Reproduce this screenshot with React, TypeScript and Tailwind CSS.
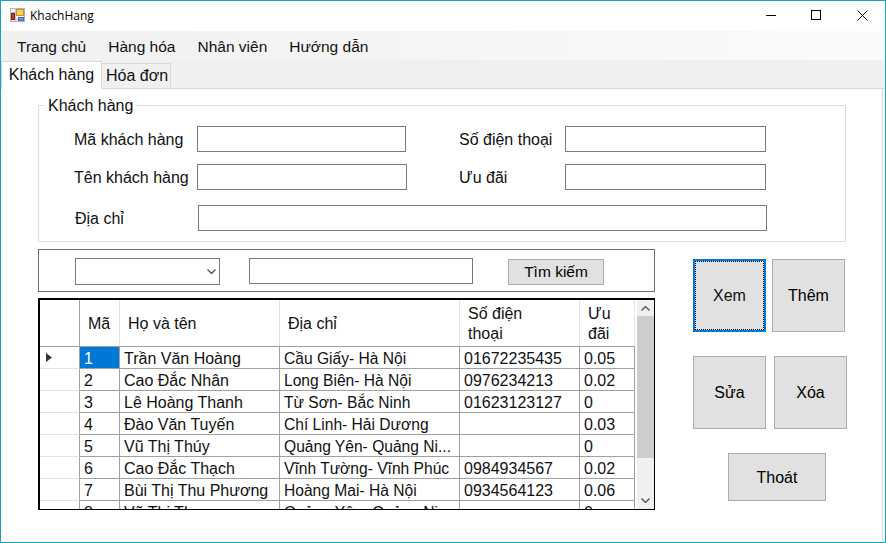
const rows = [
  { id: '1', name: 'Trần Văn Hoàng', address: 'Cầu Giấy- Hà Nội', phone: '01672235435', deal: '0.05' },
  { id: '2', name: 'Cao Đắc Nhân', address: 'Long Biên- Hà Nội', phone: '0976234213', deal: '0.02' },
  { id: '3', name: 'Lê Hoàng Thanh', address: 'Từ Sơn- Bắc Ninh', phone: '01623123127', deal: '0' },
  { id: '4', name: 'Đào Văn Tuyến', address: 'Chí Linh- Hải Dương', phone: '', deal: '0.03' },
  { id: '5', name: 'Vũ Thị Thúy', address: 'Quảng Yên- Quảng Ni...', phone: '', deal: '0' },
  { id: '6', name: 'Cao Đắc Thạch', address: 'Vĩnh Tường- Vĩnh Phúc', phone: '0984934567', deal: '0.02' },
  { id: '7', name: 'Bùi Thị Thu Phương', address: 'Hoàng Mai- Hà Nội', phone: '0934564123', deal: '0.06' },
  { id: '8', name: 'Vũ Thị Thu', address: 'Quảng Yên- Quảng Ni...', phone: '', deal: '0' },
];

function FormIcon() {
  return (
    <svg width="15" height="14" viewBox="0 0 15 14" className="shrink-0">
      <rect x="0.5" y="0.5" width="14" height="13" fill="#f4f4f4" stroke="#b4b4b4" />
      <path d="M0.5 4.5H5M5.5 0.5V13.5M5.5 11.5H14" stroke="#c4c4c4" fill="none" />
      <rect x="6.5" y="1.5" width="7" height="6" fill="#f8d052" stroke="#c8932a" />
      <rect x="1.5" y="5.5" width="3" height="6" fill="#c8321f" stroke="#8a2418" />
      <rect x="8.5" y="9.5" width="5" height="3" fill="#5f97e0" stroke="#3f6fb0" />
    </svg>
  );
}

function Chevron({ up, className }: { up?: boolean; className?: string }) {
  return (
    <svg width="9" height="5" viewBox="0 0 9 5" className={className}>
      <path d={up ? 'M0.5 4.5L4.5 0.5L8.5 4.5' : 'M0.5 0.5L4.5 4.5L8.5 0.5'} fill="none" stroke="#505050" strokeWidth="1.3" />
    </svg>
  );
}

function Input({ className }: { className: string }) {
  return <input className={`h-[26px] border border-[#7a7a7a] bg-white ${className}`} />;
}

function Button({ label, className }: { label: string; className: string }) {
  return (
    <button className={`bg-[#e1e1e1] border border-[#adadad] text-black ${className}`}>
      {label}
    </button>
  );
}

export default function App() {
  return (
    <div className="w-[886px] h-[543px] flex flex-col overflow-hidden bg-white border border-[#17a2c4] text-[16px] leading-[18px] text-[#111] font-['Liberation_Sans',Arial,sans-serif]">
      {/* title bar */}
      <div className="h-[30px] shrink-0 flex items-center pl-[9px] pb-[2px]">
        <FormIcon />
        <span className="ml-[5px] mt-[2px] text-[12px] font-['Open_Sans','Noto_Sans',sans-serif] text-black">KhachHang</span>
        <div className="ml-auto flex items-center">
          <svg width="10" height="10" viewBox="0 0 10 10" className="mr-[35px]">
            <path d="M0 5.5H10" stroke="#000" strokeWidth="1" />
          </svg>
          <svg width="10" height="10" viewBox="0 0 10 10" className="mr-[36px]">
            <rect x="0.5" y="0.5" width="9" height="9" fill="none" stroke="#000" />
          </svg>
          <svg width="11" height="11" viewBox="0 0 11 11" className="mr-[17px]">
            <path d="M0.5 0.5L10.5 10.5M10.5 0.5L0.5 10.5" stroke="#111" strokeWidth="1" />
          </svg>
        </div>
      </div>

      {/* menu */}
      <div className="h-[29px] shrink-0 flex items-center gap-[22px] pl-[16px] pt-[2px] text-[15.5px] bg-gradient-to-r from-[#f0f0f0] to-[#fbfbfb]">
        <span>Trang chủ</span>
        <span>Hàng hóa</span>
        <span>Nhân viên</span>
        <span>Hướng dẫn</span>
      </div>

      {/* tabs */}
      <div className="h-[29px] shrink-0 flex items-end bg-[#f0f0f0] border-b border-[#d9d9d9]">
        <div className="w-[101px] h-[28px] -mb-px pb-[2px] flex items-center justify-center bg-white border border-b-0 border-[#d9d9d9]">
          Khách hàng
        </div>
        <div className="w-[69px] h-[25px] pl-[2px] flex items-center justify-center border border-b-0 border-l-0 border-[#d9d9d9]">
          Hóa đơn
        </div>
      </div>

      {/* tab page */}
      <div className="flex-1 mr-[2px] border-r border-[#d9d9d9] pl-[37px] pt-[7px]">
        <fieldset className="w-[808px] h-[146px] border border-[#dcdcdc]">
          <legend className="ml-[6px] px-[3px] pt-[1px] leading-[18px]">Khách hàng</legend>
          <div className="pl-[35px] pt-[11px]">
            <div className="flex items-center h-[26px]">
              <span className="w-[123px] pt-[2px]">Mã khách hàng</span>
              <Input className="w-[209px]" />
              <span className="ml-[53px] w-[106px] pt-[2px]">Số điện thoại</span>
              <Input className="w-[201px]" />
            </div>
            <div className="flex items-center h-[26px] mt-[12px]">
              <span className="w-[123px] pt-[2px]">Tên khách hàng</span>
              <Input className="w-[210px]" />
              <span className="ml-[52px] w-[106px] pt-[2px]">Ưu đãi</span>
              <Input className="w-[201px]" />
            </div>
            <div className="flex items-center h-[26px] mt-[15px]">
              <span className="w-[124px] pl-[1px] pt-[2px]">Địa chỉ</span>
              <Input className="w-[569px]" />
            </div>
          </div>
        </fieldset>

        <div className="flex mt-[7px]">
          <div className="w-[617px] shrink-0">
            {/* search */}
            <div className="h-[43px] flex items-start border border-[#6e6e6e] pl-[36px] pt-[8px]">
              <div className="w-[145px] h-[27px] flex items-center justify-end pr-[3px] border border-[#7a7a7a]">
                <Chevron />
              </div>
              <Input className="ml-[29px] w-[224px]" />
              <Button label="Tìm kiếm" className="ml-[35px] mt-[1px] w-[96px] h-[26px] text-[15.5px] leading-none" />
            </div>

            {/* grid */}
            <div className="h-[212px] mt-[6px] flex overflow-hidden border-l-2 border-t-2 border-r border-b border-black">
              <div className="w-[595px] shrink-0 overflow-hidden">
                <div className="h-[47px] grid grid-cols-[40px_40px_160px_180px_120px_55px] border-b border-[#a0a0a0]">
                  <div className="border-r border-[#a0a0a0]" />
                  <div className="flex items-center pl-[8px] pt-[2px] border-r border-[#e3e3e3]">Mã</div>
                  <div className="flex items-center pl-[8px] pt-[2px] border-r border-[#e3e3e3]">Họ và tên</div>
                  <div className="flex items-center pl-[8px] pt-[2px] border-r border-[#e3e3e3]">Địa chỉ</div>
                  <div className="flex items-center pl-[8px] pt-[2px] leading-[20px] border-r border-[#e3e3e3]">Số điện<br />thoại</div>
                  <div className="flex items-center pl-[8px] pt-[2px] leading-[20px] border-r border-[#e3e3e3]">Ưu<br />đãi</div>
                </div>
                {rows.map((row, i) => (
                  <div key={row.id} className="h-[22px] grid grid-cols-[40px_40px_160px_180px_120px_55px]">
                    <div className="flex items-center pl-[6px] border-r border-b border-r-[#a0a0a0] border-b-[#e3e3e3]">
                      {i === 0 && (
                        <svg width="6" height="9" viewBox="0 0 6 9">
                          <path d="M0 0L6 4.5L0 9Z" fill="#333" />
                        </svg>
                      )}
                    </div>
                    <div className={`flex items-center pl-[4px] pt-[2px] border-r border-b border-[#a0a0a0] ${i === 0 ? 'bg-[#0078d7] text-white' : ''}`}>
                      {row.id}
                    </div>
                    <div className="flex items-center pl-[4px] pt-[2px] border-r border-b border-[#a0a0a0] whitespace-nowrap">{row.name}</div>
                    <div className="flex items-center pl-[4px] pt-[2px] border-r border-b border-[#a0a0a0] whitespace-nowrap text-[15.6px]">{row.address}</div>
                    <div className="flex items-center pl-[4px] pt-[2px] border-r border-b border-[#a0a0a0]">{row.phone}</div>
                    <div className="flex items-center pl-[4px] pt-[2px] border-r border-b border-[#a0a0a0]">{row.deal}</div>
                  </div>
                ))}
              </div>
              {/* scrollbar */}
              <div className="flex-1 ml-[2px] flex flex-col items-center bg-[#f0f0f0]">
                <div className="h-[16px] shrink-0 flex items-center justify-center">
                  <Chevron up />
                </div>
                <div className="w-full h-[142px] shrink-0 bg-[#cdcdcd]" />
                <div className="mt-auto h-[17px] shrink-0 flex items-center justify-center">
                  <Chevron />
                </div>
              </div>
            </div>
          </div>

          {/* action buttons */}
          <div className="ml-[38px] pt-[10px]">
            <div className="flex gap-[6px]">
              <button className="w-[73px] h-[73px] bg-[#e1e1e1] border-2 border-[#0078d7] p-0">
                <span className="w-full h-full flex items-center justify-center border border-dotted border-black">Xem</span>
              </button>
              <Button label="Thêm" className="w-[73px] h-[73px]" />
            </div>
            <div className="flex gap-[8px] mt-[24px]">
              <Button label="Sửa" className="w-[73px] h-[73px]" />
              <Button label="Xóa" className="w-[73px] h-[73px]" />
            </div>
            <div className="mt-[24px] ml-[35px]">
              <Button label="Thoát" className="w-[98px] h-[48px] pt-[2px]" />
            </div>
          </div>
        </div>
      </div>
    </div>
  );
}
